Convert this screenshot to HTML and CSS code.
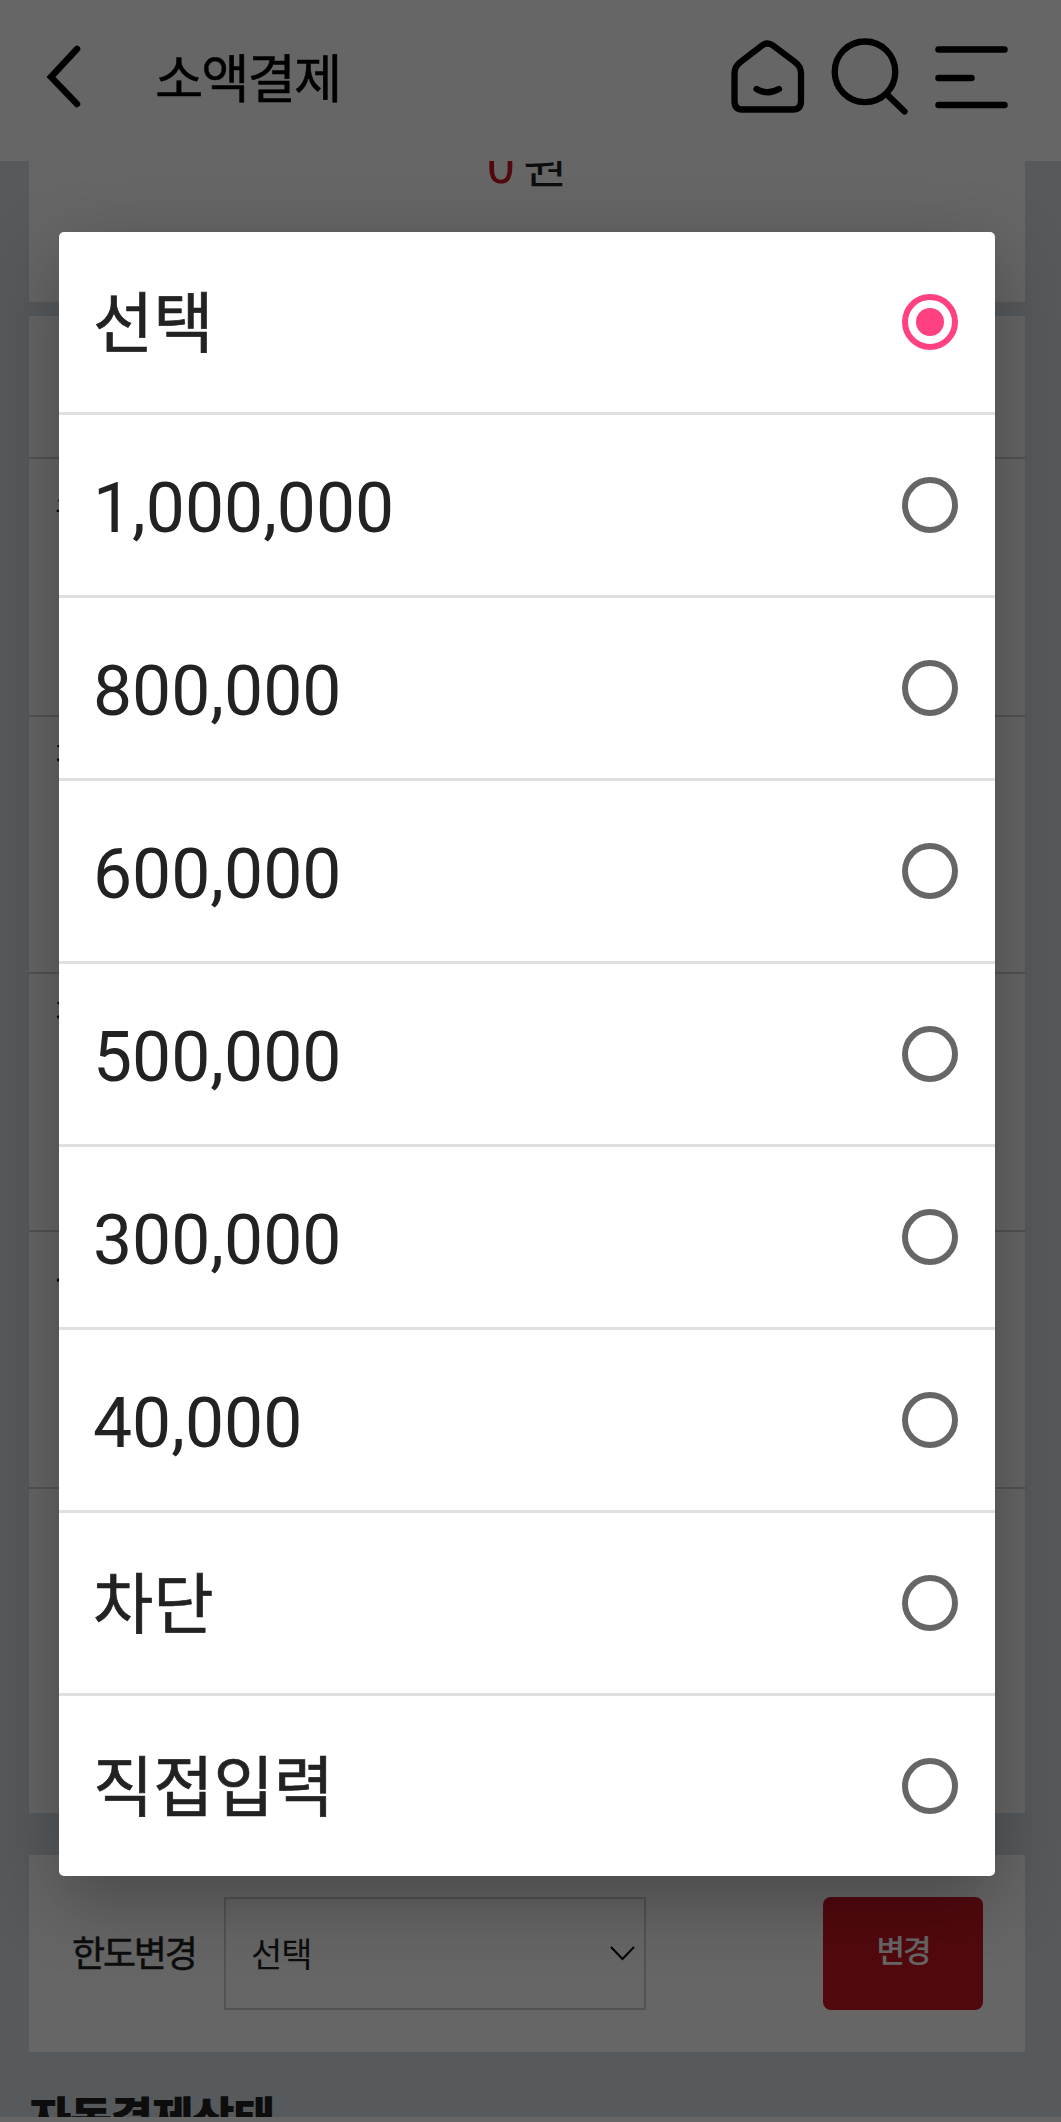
FILE: index.html
```
<!DOCTYPE html>
<html lang="ko">
<head>
  <meta charset="UTF-8">
  <meta name="viewport" content="width=device-width, initial-scale=1.0">
  <title>소액결제</title>
  <link rel="stylesheet" href="styles.css">
</head>
<body>

  <div class="page">
    <header class="header">
      <svg class="back" width="40" height="68" viewBox="0 0 40 68" fill="none" stroke="#000" stroke-width="6.5" stroke-linecap="round" stroke-linejoin="miter">
        <path d="M33 6 L7 34 L33 61"/>
      </svg>
      <h1 class="title">소액결제</h1>
      <div class="header-icons">
        <svg width="80" height="80" viewBox="0 0 80 80" fill="none" stroke="#000" stroke-width="6.3" stroke-linecap="round" stroke-linejoin="round">
          <path d="M34 5.500 Q39.500 1.500 45 5.500 L67 22 Q73 26.500 73 33.500 L73 61 Q73 69.500 65 69.500 L14 69.500 Q6.500 69.500 6.500 61 L6.500 33.500 Q6.500 26.500 12.500 22 Z"/>
          <path d="M28.500 49 Q39.500 55.500 51 49"/>
        </svg>
        <svg width="80" height="80" viewBox="0 0 80 80" fill="none" stroke="#000" stroke-width="6.3" stroke-linecap="round">
          <circle cx="37" cy="31.800" r="30.300"/>
          <path d="M59 54.500 L76.500 71.500"/>
        </svg>
        <svg width="80" height="80" viewBox="0 0 80 80" fill="none" stroke="#000" stroke-width="6.5" stroke-linecap="round">
          <path d="M10.500 9.500 H76.500 M10.500 38 H43.500 M10.500 65 H76.500"/>
        </svg>
      </div>
    </header>

    <main class="content">
      <section class="card amount-card">
        <p class="amount"><span class="amount-num">0</span>원</p>
      </section>

      <section class="card limit-card">
        <div class="limit-head"></div>
        <div class="limit-row">소액</div>
        <div class="limit-row">잔여</div>
        <div class="limit-row">잔여</div>
        <div class="limit-row">사용</div>
        <div class="limit-last"></div>
      </section>

      <section class="card change-card">
        <span class="change-label">한도변경</span>
        <div class="select">
          <span class="select-text">선택</span>
          <svg width="25" height="15" viewBox="0 0 25 15" fill="none" stroke="#000" stroke-width="2">
            <path d="M1 1 L12.500 13 L24 1"/>
          </svg>
        </div>
        <button class="change-btn">변경</button>
      </section>

      <h2 class="section-title">자동결제상태</h2>
    </main>
    <div class="bottom-bar"></div>
  </div>

  <div class="overlay">
    <ul class="dialog">
      <li class="option hangul"><span>선택</span><i class="radio checked"></i></li>
      <li class="option"><span>1,000,000</span><i class="radio"></i></li>
      <li class="option"><span>800,000</span><i class="radio"></i></li>
      <li class="option"><span>600,000</span><i class="radio"></i></li>
      <li class="option"><span>500,000</span><i class="radio"></i></li>
      <li class="option"><span>300,000</span><i class="radio"></i></li>
      <li class="option"><span>40,000</span><i class="radio"></i></li>
      <li class="option hangul"><span>차단</span><i class="radio"></i></li>
      <li class="option hangul"><span>직접입력</span><i class="radio"></i></li>
    </ul>
  </div>

</body>
</html>
```
FILE: styles.css
```
* {
  box-sizing: border-box;
  margin: 0;
  padding: 0;
}
body {
  font-family: Roboto, "Noto Sans CJK KR", sans-serif;
  background-color: #d7e1e8;
  color: #222;
}
.page {
  display: flex;
  flex-direction: column;
  height: 2122px;
  overflow: hidden;
}
.header {
  display: flex;
  align-items: flex-start;
  flex: none;
  height: 161px;
  padding: 40px 53px 0 44px;
  background: #fff;
}
.header svg {
  overflow: visible;
}
.back {
  margin-top: 3px;
}
.title {
  margin-left: 71px;
  padding-top: 1px;
  font-size: 52.500px;
  font-weight: 400;
  line-height: 78px;
  letter-spacing: -2px;
  color: #000;
  -webkit-text-stroke: 0.5px #000;
}
.header-icons {
  display: flex;
  gap: 20px;
  margin-left: auto;
}
.content {
  flex: 1;
  min-height: 0;
  padding: 0 36px 0 29px;
  overflow: hidden;
}
.card {
  background: #fff;
}
.amount-card {
  height: 141px;
  overflow: hidden;
}
.amount {
  margin-top: -25px;
  font-size: 48px;
  line-height: 60px;
  text-align: center;
}
.amount-num {
  margin-right: 8px;
  font-size: 51px;
  color: #cd1824;
}
.limit-card {
  height: 1497px;
  margin-top: 14px;
}
.limit-head {
  height: 141px;
}
.limit-row {
  height: 257.600px;
  padding: 17px 26px;
  border-top: 2px solid #d0d0d0;
  font-size: 34px;
  line-height: 50px;
  color: #000;
}
.limit-last {
  border-top: 2px solid #d0d0d0;
}
.change-card {
  display: flex;
  align-items: center;
  height: 197px;
  margin-top: 42px;
  padding: 0 42px 0 43px;
}
.change-label {
  width: 152px;
  padding-bottom: 5px;
  font-size: 36px;
  letter-spacing: -2.200px;
  -webkit-text-stroke: 0.5px #222;
}
.select {
  display: flex;
  align-items: center;
  justify-content: space-between;
  width: 422px;
  height: 113px;
  padding: 0 9px 0 25px;
  border: 2px solid #d0d0d0;
  font-size: 34px;
  letter-spacing: -1px;
}
.select-text {
  padding-bottom: 3px;
}
.change-btn {
  width: 160px;
  height: 113px;
  margin-left: auto;
  padding-bottom: 10px;
  border: none;
  border-radius: 8px;
  background: #cd1824;
  color: #fff;
  font-family: inherit;
  font-size: 31px;
  font-weight: 500;
  letter-spacing: -2px;
}
.section-title {
  margin-top: 34px;
  font-size: 46px;
  font-weight: 900;
  line-height: 66px;
  letter-spacing: -1.500px;
}
.bottom-bar {
  flex: none;
  height: 5px;
  background: #fff;
}

/* select popup */
.overlay {
  position: absolute;
  top: 0;
  left: 0;
  width: 1061px;
  height: 2122px;
  padding: 232px 66px 0 59px;
  background: rgba(0, 0, 0, 0.6);
}
.dialog {
  list-style: none;
  border-radius: 5px;
  background: #fff;
  box-shadow: 0 24px 76px rgba(0, 0, 0, 0.3);
}
.option {
  display: flex;
  align-items: center;
  justify-content: space-between;
  height: 183px;
  padding: 0 37px 0 34px;
  border-bottom: 3px solid #e0e0e0;
  font-size: 69.600px;
  line-height: 90px;
}
.option span {
  padding-top: 6px;
}
.option:last-child {
  height: 180px;
  border-bottom: none;
}
.hangul {
  font-size: 65.500px;
  -webkit-text-stroke: 0.7px #222;
}
.radio {
  display: grid;
  place-items: center;
  width: 56px;
  height: 56px;
  border: 6px solid #666;
  border-radius: 50%;
}
.checked {
  border-color: #ff4081;
}
.checked::after {
  content: "";
  width: 28px;
  height: 28px;
  border-radius: 50%;
  background: #ff4081;
}
```
